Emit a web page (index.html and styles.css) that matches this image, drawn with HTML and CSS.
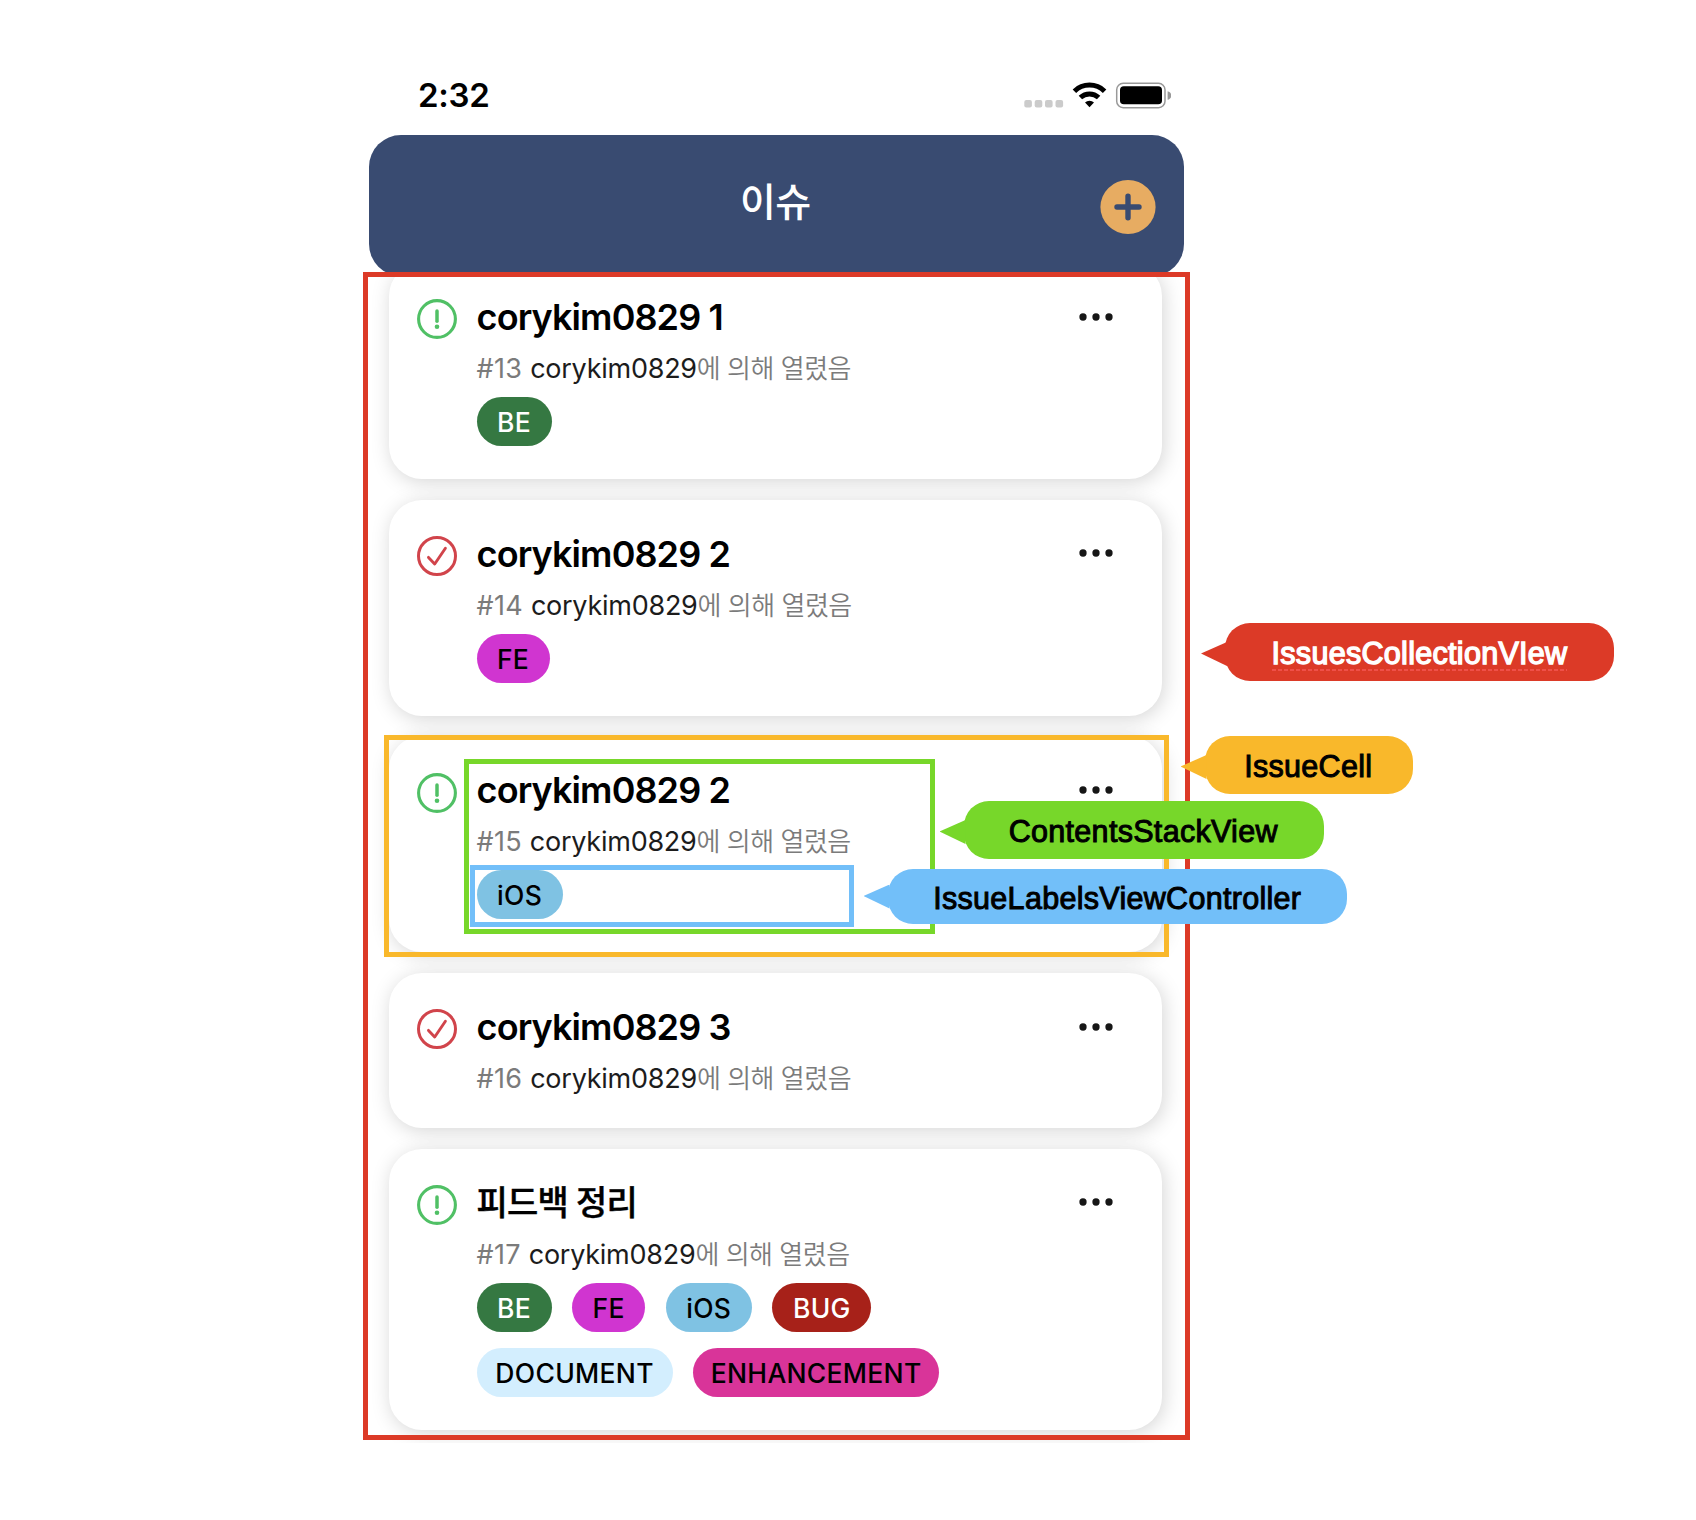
FILE: index.html
```html
<!DOCTYPE html>
<html lang="ko">
<head>
<meta charset="utf-8">
<title>이슈</title>
<link rel="stylesheet" href="styles.css">
</head>
<body>
<svg class="defs" width="0" height="0" aria-hidden="true">
  <symbol id="open" viewBox="0 0 40 40">
    <circle cx="20" cy="20" r="18.4" fill="none" stroke="#50c065" stroke-width="3.1"/>
    <path d="M20 12v10.200" stroke="#50c065" stroke-width="3.500" stroke-linecap="round"/>
    <circle cx="20" cy="27.700" r="2.300" fill="#50c065"/>
  </symbol>
  <symbol id="closed" viewBox="0 0 40 40">
    <circle cx="20" cy="20" r="18.500" fill="none" stroke="#d1444b" stroke-width="3"/>
    <path d="M11.500 21.400l6.200 6.600L28.400 12.200" fill="none" stroke="#d1444b" stroke-width="2.900" stroke-linecap="round" stroke-linejoin="round"/>
  </symbol>
  <symbol id="more" viewBox="0 0 36 10">
    <circle cx="5" cy="5" r="3.650"/><circle cx="18" cy="5" r="3.650"/><circle cx="31" cy="5" r="3.650"/>
  </symbol>
</svg>

<main class="stage">
  <div class="phone">
    <div class="status">
      <span class="time">2:32</span>
      <svg class="indicators" width="150" height="30" viewBox="0 0 150 30">
        <g fill="#cbcbcb">
          <rect x="3.3" y="20" width="7.6" height="7.4" rx="2"/><rect x="13.7" y="20" width="7.6" height="7.4" rx="2"/><rect x="24" y="20" width="7.6" height="7.4" rx="2"/><rect x="34.5" y="20" width="7.6" height="7.4" rx="2"/>
        </g>
        <g fill="none" stroke="#000" stroke-width="5">
          <path d="M53.4 11.2a21.8 21.8 0 0 1 30.2 0"/>
          <path d="M59.4 17.500a13.4 13.4 0 0 1 18.2 0"/>
        </g>
        <path d="M64 22.400a6.6 6.6 0 0 1 9 0L68.500 27.300z"/>
        <rect x="95.700" y="3.300" width="48.300" height="24.400" rx="6.500" fill="none" stroke="#999" stroke-width="1.500"/>
        <rect x="99" y="6.300" width="42" height="18" rx="3.800"/>
        <path d="M146.600 11.300c5 1.500 5 7 0 8.500z" fill="#999"/>
      </svg>
    </div>
    <header class="navbar">
      <h1>이슈</h1>
      <svg class="add" width="56" height="56" viewBox="0 0 56 56">
        <ellipse cx="28" cy="28" rx="27.600" ry="27" fill="#e7ac62"/>
        <path d="M17 28h22M28 17.300v21.400" stroke="#394b71" stroke-width="5.400" stroke-linecap="round"/>
      </svg>
    </header>
    <section class="list">
      <article class="card">
        <svg class="state"><use href="#open"/></svg>
        <div class="contents">
          <h2>corykim0829 1</h2>
          <p>#13 <b>corykim0829</b><i>에 의해 열렸음</i></p>
          <div class="labels"><span class="pill be">BE</span></div>
        </div>
        <svg class="more"><use href="#more"/></svg>
      </article>
      <article class="card">
        <svg class="state"><use href="#closed"/></svg>
        <div class="contents">
          <h2>corykim0829 2</h2>
          <p>#14 <b>corykim0829</b><i>에 의해 열렸음</i></p>
          <div class="labels"><span class="pill fe">FE</span></div>
        </div>
        <svg class="more"><use href="#more"/></svg>
      </article>
      <article class="card">
        <svg class="state"><use href="#open"/></svg>
        <div class="contents">
          <h2>corykim0829 2</h2>
          <p>#15 <b>corykim0829</b><i>에 의해 열렸음</i></p>
          <div class="labels"><span class="pill ios">iOS</span></div>
        </div>
        <svg class="more"><use href="#more"/></svg>
      </article>
      <article class="card">
        <svg class="state"><use href="#closed"/></svg>
        <div class="contents">
          <h2>corykim0829 3</h2>
          <p>#16 <b>corykim0829</b><i>에 의해 열렸음</i></p>
        </div>
        <svg class="more"><use href="#more"/></svg>
      </article>
      <article class="card">
        <svg class="state"><use href="#open"/></svg>
        <div class="contents">
          <h2 class="korean">피드백 정리</h2>
          <p>#17 <b>corykim0829</b><i>에 의해 열렸음</i></p>
          <div class="labels">
            <span class="pill be">BE</span><span class="pill fe">FE</span><span class="pill ios">iOS</span><span class="pill bug">BUG</span>
            <span class="pill document">DOCUMENT</span><span class="pill enhancement">ENHANCEMENT</span>
          </div>
        </div>
        <svg class="more"><use href="#more"/></svg>
      </article>
    </section>
  </div>

  <div class="frame frame-collection"></div>
  <div class="frame frame-cell"></div>
  <div class="frame frame-stack"></div>
  <div class="frame frame-labels"></div>

  <div class="callout callout-collection"><span>IssuesCollectionVIew</span></div>
  <div class="callout callout-cell"><span>IssueCell</span></div>
  <div class="callout callout-stack"><span>ContentsStackView</span></div>
  <div class="callout callout-labels"><span>IssueLabelsViewController</span></div>
</main>
</body>
</html>
```
FILE: styles.css
```css
* { box-sizing: border-box; margin: 0; }
body { background: #fff; font-family: Inter, "Noto Sans CJK KR", sans-serif; color: #000; }
.defs { position: absolute; }
.stage { position: relative; width: 1696px; height: 1520px; overflow: hidden; }

.phone { width: 815.500px; height: 1443px; margin-left: 368.900px; overflow: hidden; }
.status { height: 135.300px; padding: 79.500px 13.500px 0 49px; display: flex; justify-content: space-between; }
.time { font-size: 33px; font-weight: 600; line-height: 31px; letter-spacing: -0.2px; }
.indicators { flex: none; }

.navbar { position: relative; z-index: 1; height: 140.700px; border-radius: 32px; background: #394b71; display: grid; grid-template-columns: 1fr auto 1fr; align-items: center; padding: 3px 28px 0; }
.navbar h1 { grid-column: 2; color: #fff; font-size: 39px; font-weight: 500; line-height: 50px; margin: -10.500px 3px 0 0; letter-spacing: -0.700px; }
.add { justify-self: end; }

.list { display: flex; flex-direction: column; gap: 20.700px; padding: 0 22px 0 20.400px; margin-top: -13.100px; }
.card { display: flex; align-items: flex-start; padding: 36px 48.100px 33px 27.700px; border-radius: 33px; background: #fff; box-shadow: 2px 3px 20px rgba(0, 0, 0, .17); }
.state { flex: none; width: 40px; height: 40px; margin: .3px 19.600px 0 0; }
.contents { flex: 1; }
.card h2 { height: 50px; font-size: 36px; font-weight: 600; line-height: 36px; letter-spacing: -0.900px; }
.card h2.korean { font-size: 34px; font-weight: 500; letter-spacing: -0.850px; -webkit-text-stroke: .4px; }
.card p { height: 36px; padding-top: 2px; font-size: 27px; line-height: 36px; letter-spacing: .3px; color: #7b7b7b; white-space: nowrap; }
.card p b { font-weight: 400; letter-spacing: -0.250px; color: #1c1c1c; }
.card p i { font-style: normal; font-size: 26px; font-weight: 350; letter-spacing: -0.500px; }
.more { flex: none; width: 36px; height: 10px; margin-top: 12.700px; fill: #161616; }

.labels { display: flex; flex-wrap: wrap; gap: 16.400px 20.600px; width: 480px; margin-top: 12px; }
.pill { height: 49px; border-radius: 24.500px; font-size: 26.500px; font-weight: 550; line-height: 50px; text-align: center; letter-spacing: .3px; }
.be { width: 75px; background: #357842; color: #fff; }
.fe { width: 73px; background: #d035d0; }
.ios { width: 86px; background: #7fc2e3; }
.bug { width: 99px; background: #a72119; color: #fff; }
.document { width: 196px; background: #d3eefe; }
.enhancement { width: 246px; background: #d93499; }

/* Annotation layer floating over the screen */
.frame, .callout { position: absolute; z-index: 2; }
.frame { border: 5px solid; }
.frame-collection { left: 363px; top: 272px; width: 827px; height: 1168px; border-color: #dc3a27; }
.frame-cell { left: 384px; top: 735px; width: 785px; height: 222px; border-color: #f9b82b; }
.frame-stack { left: 464px; top: 759px; width: 471px; height: 175px; border-color: #77d72a; }
.frame-labels { left: 470px; top: 865px; width: 384px; height: 62px; border-color: #72bff9; }

.callout { height: 58px; padding-top: 3px; border-radius: 25px; display: flex; justify-content: center; align-items: center; background: var(--c); font: 500 30.500px "Liberation Sans", sans-serif; letter-spacing: .300px; white-space: nowrap; -webkit-text-stroke: 1px; }
.callout::before { content: ""; position: absolute; left: -24px; top: 19px; width: 26px; height: 24px; background: var(--c); clip-path: polygon(0 48%, 100% 0, 100% 100%); }
.callout-collection { --c: #dc3a27; left: 1225px; top: 623px; width: 389px; color: #fff; -webkit-text-stroke: 1.400px; }
.callout-collection span { background: repeating-linear-gradient(90deg, #ef5049 0 4px, transparent 4px 6px) 0 100% / 100% 2px no-repeat; }
.callout-cell { --c: #f9b82b; left: 1204.500px; top: 736px; width: 208.500px; padding-right: 1px; }
.callout-stack { --c: #77d72a; left: 963.500px; top: 801px; width: 360.500px; padding-right: 1px; }
.callout-labels { --c: #72bff9; left: 887.500px; top: 869px; width: 459.500px; height: 55px; }
.callout-labels::before { top: 15.500px; }
```
